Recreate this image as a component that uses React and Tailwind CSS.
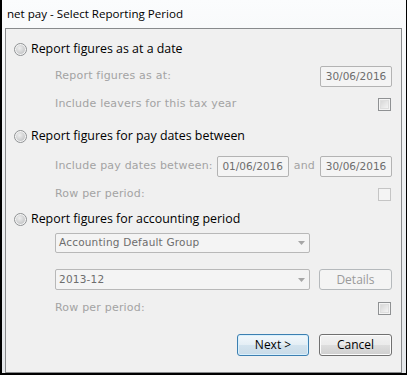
import React from 'react';

const ui = "font-['Open_Sans','Noto_Sans',sans-serif]";
const dim = "font-['DejaVu_Sans',sans-serif] text-[11px] tracking-[0.2px] text-[#a3a3a3]";

function Radio() {
  return (
    <div className="w-[13px] h-[13px] rounded-full border border-[#8e9193] bg-[#f4f4f4] flex items-center justify-center shrink-0">
      <div className="w-[9px] h-[9px] rounded-full bg-[radial-gradient(circle_at_40%_35%,#eeeeee,#b9bbbd)]" />
    </div>
  );
}

function Check({ light }) {
  return (
    <div
      className={
        light
          ? 'w-[13px] h-[13px] border border-[#c5c5c5] bg-[#f4f4f4]'
          : 'w-[13px] h-[13px] border border-[#8f9193] bg-[#f4f4f4] p-[1px]'
      }
    >
      {!light && <div className="w-full h-full bg-[linear-gradient(135deg,#d8d8d8,#f4f4f4)] border border-[#dedede]" />}
    </div>
  );
}

function DateBox({ value, className = '' }) {
  return (
    <div
      className={`h-[21px] w-[72px] border border-[#b3b3b3] rounded-[2px] bg-[#f4f4f4] flex items-center justify-center font-['DejaVu_Sans',sans-serif] text-[10.5px] text-[#6d6d6d] ${className}`}
    >
      {value}
    </div>
  );
}

function Dropdown({ value, h }) {
  return (
    <div
      className={`${h} w-[255px] border border-[#b8b8b8] rounded-[2px] bg-[#f4f4f4] flex items-center justify-between pl-[3px] pr-[4px] font-['DejaVu_Sans',sans-serif] text-[10.5px] tracking-[0.2px] text-[#6d6d6d]`}
    >
      <span>{value}</span>
      <svg width="7" height="4" viewBox="0 0 7 4">
        <path d="M0 0h7L3.5 4z" fill="#a6a6a6" />
      </svg>
    </div>
  );
}

export default function App() {
  return (
    <div className="w-[407px] h-[375px] bg-[linear-gradient(180deg,#fbfcfd_0%,#eef0f2_40%,#e4e7ea_100%)] border-l-[2px] border-r border-b-[2px] border-black flex flex-col">
      <div className={`h-[28px] pl-[5px] flex items-center text-[11.6px] text-black ${ui}`}>
        net pay - Select Reporting Period
      </div>
      <div className="ml-[3px] mr-[4px] flex-1 border border-[#888a8c] bg-[#f0f0f0] flex flex-col pl-[8px] pr-[9px] pt-[10px]">
        <div className={`h-[20px] flex items-center gap-[4px] text-[12.4px] text-black ${ui}`}>
          <Radio />
          <span>Report figures as at a date</span>
        </div>
        <div className="mt-[7px] h-[21px] pl-[41px] flex items-center justify-between">
          <span className={dim}>Report figures as at:</span>
          <DateBox value="30/06/2016" />
        </div>
        <div className="mt-[7px] h-[21px] pl-[41px] flex items-center justify-between">
          <span className={dim}>Include leavers for this tax year</span>
          <div className="pr-[1px]">
            <Check />
          </div>
        </div>

        <div className={`mt-[11px] h-[20px] flex items-center gap-[4px] text-[12.4px] text-black ${ui}`}>
          <Radio />
          <span>Report figures for pay dates between</span>
        </div>
        <div className="mt-[10px] h-[21px] pl-[41px] flex items-center">
          <span className={`${dim} flex-1`}>Include pay dates between:</span>
          <DateBox value="01/06/2016" />
          <span className={`${dim} px-[5px]`}>and</span>
          <DateBox value="30/06/2016" />
        </div>
        <div className="mt-[7px] h-[21px] pl-[41px] flex items-center justify-between">
          <span className={dim}>Row per period:</span>
          <div className="pr-[1px]">
            <Check light />
          </div>
        </div>

        <div className={`mt-[4px] h-[20px] flex items-center gap-[4px] text-[12.4px] text-black ${ui}`}>
          <Radio />
          <span>Report figures for accounting period</span>
        </div>
        <div className="mt-[4px] pl-[41px] flex items-center">
          <Dropdown value="Accounting Default Group" h="h-[20px]" />
        </div>
        <div className="mt-[16px] pl-[41px] flex items-center justify-between">
          <Dropdown value="2013-12" h="h-[21px]" />
          <div className={`h-[21px] w-[73px] border border-[#b5b9bc] rounded-[3px] bg-[#f4f4f4] flex items-center justify-center text-[12px] text-[#9a9a9a] ${ui}`}>
            Details
          </div>
        </div>
        <div className="mt-[8px] h-[21px] pl-[41px] flex items-center justify-between">
          <span className={dim}>Row per period:</span>
          <div className="pr-[1px]">
            <Check />
          </div>
        </div>

        <div className={`mt-[15px] flex justify-end gap-[10px] text-[12px] text-black ${ui}`}>
          <button className="h-[22px] w-[72px] rounded-[3px] border border-[#3c7fb1] bg-[linear-gradient(180deg,#f2f8fc_0%,#e4eef5_50%,#d3e3ee_51%,#c9dbe8_100%)] shadow-[inset_0_0_0_1px_#d8f0fd]">
            Next &gt;
          </button>
          <button className="h-[22px] w-[73px] rounded-[3px] border border-[#707070] bg-[linear-gradient(180deg,#f2f2f2_0%,#ebebeb_50%,#dddddd_51%,#cfcfcf_100%)] shadow-[inset_0_0_0_1px_#fcfcfc]">
            Cancel
          </button>
        </div>
      </div>
    </div>
  );
}
